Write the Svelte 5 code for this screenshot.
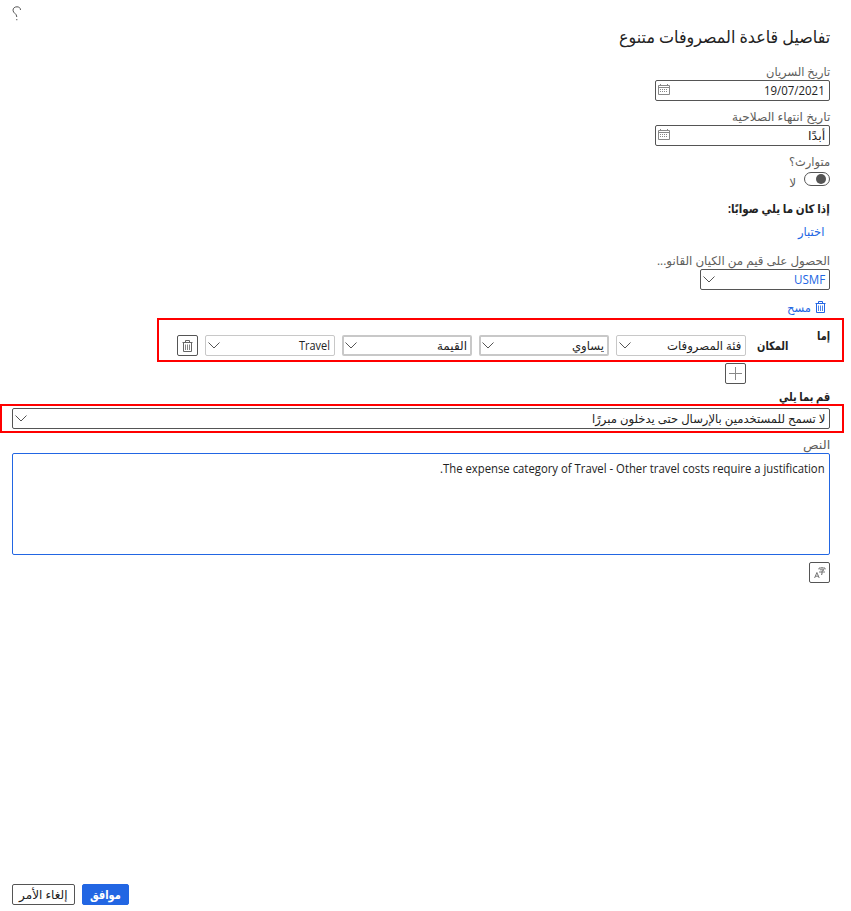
<script>
  const conditions = [
    { text: 'فئة المصروفات', width: 74, heavy: false },
    { text: 'يساوي', width: 32, heavy: true },
    { text: 'القيمة', width: 30, heavy: true },
    { text: 'Travel', width: 31, heavy: false }
  ];

  // Condenses or widens a line of text so that it fills its given width.
  function fit(node, width) {
    const natural = node.offsetWidth;
    if (natural) node.style.transform = `scaleX(${width / natural})`;
  }
</script>

{#snippet label(text, width)}
  <span class="t" style:width="{width}px"><span class="in" use:fit={width}>{text}</span></span>
{/snippet}

{#snippet chevron()}
  <svg class="chev" width="14" height="9" viewBox="0 0 14 9"><path d="M1.500 1.500 7 7l5.500-5.500" fill="none" stroke="#555" /></svg>
{/snippet}

{#snippet calendar()}
  <svg class="cal" width="12" height="11" viewBox="0 0 12 11" fill="none" stroke="#888">
    <path d="M.5 1.500h11v9H.5zM.5 3.500h11M2.500 0v2M9.500 0v2" />
    <path d="M2 5.500h8M2 7.500h8" stroke-dasharray="1 1" />
  </svg>
{/snippet}

{#snippet trash()}
  <svg width="11" height="12" viewBox="0 0 11 12" fill="none" stroke="currentColor">
    <path d="M.5 2.500h10M3.500 2V.5h4V2M1.500 3v8.500h8V3" />
    <path d="M3.500 4.500v5.500M5.500 4.500v5.500M7.500 4.500v5.500" stroke-opacity=".8" />
  </svg>
{/snippet}

<div class="page" dir="rtl">
  <header>
    <svg width="10" height="16" viewBox="0 0 10 16"><path d="M8.500 4C8.500 1.800 6.900.8 5 .8 2.600.8 1 2.200 1 4.200 1 7.400 4.800 7.200 4.800 11" fill="none" stroke="#555" /><path d="M4.300 13h1v1.200h-1z" fill="#555" /></svg>
  </header>
  <h1>{@render label('تفاصيل قاعدة المصروفات متنوع', 211)}</h1>

  <div class="lab first">{@render label('تاريخ السريان', 64)}</div>
  <div class="box date">{@render label('19/07/2021', 61)}{@render calendar()}</div>
  <div class="lab second">{@render label('تاريخ انتهاء الصلاحية', 98)}</div>
  <div class="box date">{@render label('أبدًا', 17)}{@render calendar()}</div>

  <div class="lab third">{@render label('متوارث؟', 41)}</div>
  <div class="switch"><span class="track"><i></i></span><span class="no">{@render label('لا', 7)}</span></div>
  <div class="head if">{@render label('إذا كان ما يلي صوابًا:', 102)}</div>
  <div class="link test">{@render label('اختبار', 26)}</div>
  <div class="lab entity">{@render label('الحصول على قيم من الكيان القانو...', 173)}</div>
  <div class="box company">{@render label('USMF', 31)}{@render chevron()}</div>
  <div class="link clear">{@render trash()}{@render label('مسح', 24)}</div>

  <section class="mark rule">
    <div class="head either">{@render label('إما', 13)}</div>
    <div class="head where">{@render label('المكان', 31)}</div>
    <div class="fields">
      {#each conditions as c}
        <div class="box soft" class:heavy={c.heavy}>{@render label(c.text, c.width)}{@render chevron()}</div>
      {/each}
      <div class="btn">{@render trash()}</div>
    </div>
  </section>
  <div class="btn add"><svg width="13" height="13" viewBox="0 0 13 13"><path d="M6.500 0v13M0 6.500h13" stroke="#888" /></svg></div>

  <div class="head then">{@render label('قم بما يلي', 51)}</div>
  <section class="mark action">
    <div class="box">{@render label('لا تسمح للمستخدمين بالإرسال حتى يدخلون مبررًا', 233)}{@render chevron()}</div>
  </section>
  <div class="lab textlab">{@render label('النص', 27)}</div>
  <div class="area">{@render label('The expense category of Travel - Other travel costs require a justification.', 385)}</div>
  <div class="btn translate">
    <svg width="12" height="12" viewBox="0 0 12 12" fill="none" stroke="#666" stroke-width=".9">
      <path d="M.6 11 2.900 5.500 5.200 11M1.400 9.200h3M5 2.500V1h6v1.500M8 0v1M6 2.800h4L8 4.200V7.500L7 7.100M5 5h6" />
    </svg>
  </div>

  <footer>
    <div class="action-btn ok">{@render label('موافق', 31)}</div>
    <div class="action-btn cancel">{@render label('إلغاء الأمر', 48)}</div>
  </footer>
</div>

<style>
  :global(body) { margin: 0; background: #fff; }
  .page {
    box-sizing: border-box; width: 851px; height: 911px; padding: 0 21px 6px 12px;
    display: flex; flex-direction: column; align-items: flex-start; overflow: hidden;
    font: 12px/16px "Open Sans", "DejaVu Sans", sans-serif; color: #222;
  }
  .page > * { flex: none; }
  .t { display: inline-block; white-space: nowrap; flex: none; }
  .in { display: inline-block; transform-origin: right center; }
  header { align-self: flex-end; height: 22px; padding-top: 6px; box-sizing: border-box; line-height: 0; }
  h1 { margin: 3px 0 0; font-size: 17px; line-height: 24px; font-weight: 400; color: #222; height: 24px; }
  .lab { height: 16px; color: #605e5c; }
  .first { margin-top: 15px; }
  .second { margin-top: 8px; }
  .third { margin-top: 8px; }
  .entity { margin-top: 13px; }
  .textlab { margin-top: 4px; }
  .box {
    box-sizing: border-box; height: 21px; border: 1px solid #555; border-radius: 2px;
    display: flex; align-items: center; justify-content: space-between; padding: 0 4px 0 1px; background: #fff; color: #222;
  }
  .date { width: 175px; padding-left: 2px; }
  .cal { margin-top: -2px; }
  .switch { display: flex; height: 17px; margin-top: 2px; }
  .track { box-sizing: border-box; width: 26px; height: 14px; border: 1px solid #555; border-radius: 7px; padding: 1px 3px; }
  .track i { display: block; width: 10px; height: 10px; border-radius: 5px; background: #555; }
  .no { margin: 3px 8px 0 0; color: #605e5c; }
  .head { font-weight: 700; color: #222; height: 16px; }
  .if { margin-top: 12px; }
  .link { color: #2266e3; height: 16px; }
  .test { margin: 7px 6px 0 0; }
  .company { width: 130px; color: #2266e3; }
  .clear { margin: 10px 4px 0 0; display: flex; gap: 4px; }
  .clear svg { margin-top: 1px; }
  .mark { box-sizing: border-box; border: 2px solid #f00; }
  .rule { width: 687px; height: 44px; margin: 2px -14px 0 0; padding-right: 12px; display: flex; align-items: flex-start; }
  .either { margin-top: 8px; width: 42px; }
  .where { margin-top: 18px; width: 42px; }
  .fields { display: flex; gap: 7px; margin-top: 15px; }
  .fields .box { width: 130px; }
  .soft { border-color: #c8c8c8; }
  .heavy { border-width: 2px; padding: 0 3px 0 0; }
  .btn { box-sizing: border-box; width: 21px; height: 21px; border: 1px solid #555; border-radius: 2px; display: flex; align-items: center; justify-content: center; color: #666; }
  .add { margin: 1px 84px 0 0; }
  .then { margin-top: 5px; }
  .action { width: 844px; height: 29px; margin: -1px -14px 0 0; padding: 2px 12px 0 10px; }
  .area { box-sizing: border-box; width: 818px; height: 102px; border: 1px solid #2266e3; border-radius: 2px; padding: 7px 4px; }
  .translate { margin-top: 7px; }
  footer { margin-top: auto; align-self: flex-end; display: flex; gap: 7px; }
  .action-btn { box-sizing: border-box; height: 21px; border: 1px solid #555; border-radius: 2px; display: flex; align-items: center; justify-content: center; }
  .ok { width: 47px; background: #2266e3; border-color: #2266e3; color: #fff; font-weight: 700; }
  .cancel { width: 63px; }
</style>
